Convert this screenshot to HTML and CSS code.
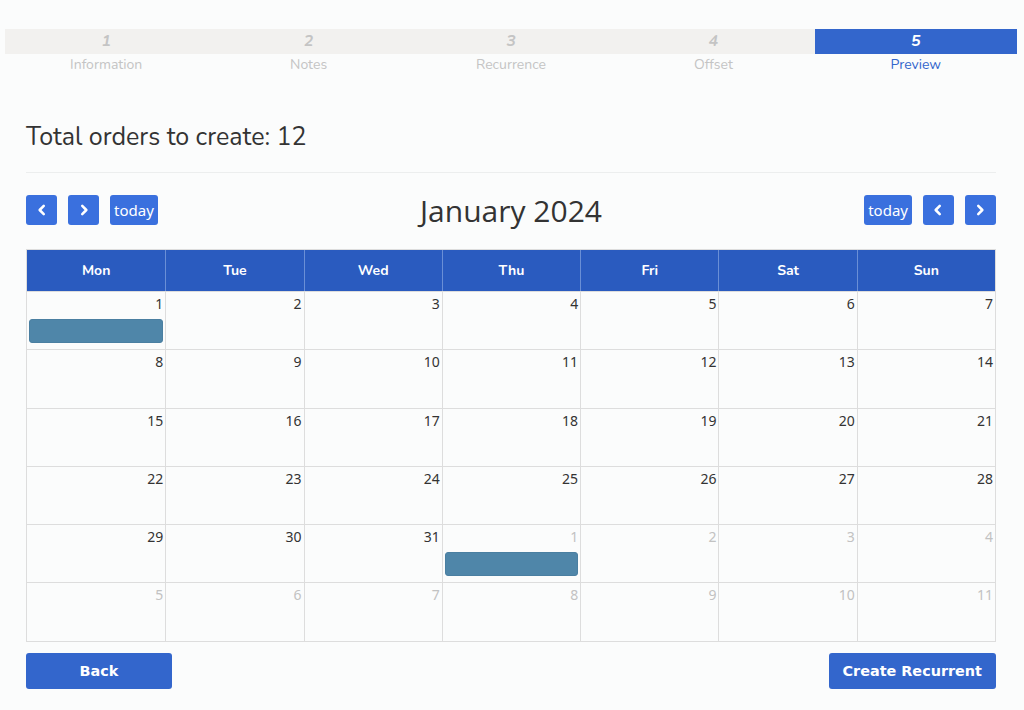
FILE: index.html
```html
<!DOCTYPE html>
<html lang="en">
<head>
    <meta charset="UTF-8">
    <title>Recurrent Order - Preview</title>
    <link rel="stylesheet" href="styles.css">
</head>
<body>

<div class="wizard">
    <div class="steps">
        <div class="step"><div class="step-num">1</div><div class="step-label">Information</div></div>
        <div class="step"><div class="step-num">2</div><div class="step-label">Notes</div></div>
        <div class="step"><div class="step-num">3</div><div class="step-label">Recurrence</div></div>
        <div class="step"><div class="step-num">4</div><div class="step-label">Offset</div></div>
        <div class="step active"><div class="step-num">5</div><div class="step-label">Preview</div></div>
    </div>

    <div class="content">
        <h2 class="total">Total orders to create: 12</h2>
        <div class="divider"></div>

        <div class="toolbar">
            <div class="tb-group">
                <button class="tb-btn icon">
                    <svg width="14" height="14" viewBox="0 0 12 12"><path d="M7.5 2.5 4 6l3.5 3.5" fill="none" stroke="#fff" stroke-width="2.2" stroke-linecap="round" stroke-linejoin="round"/></svg>
                </button>
                <button class="tb-btn icon">
                    <svg width="14" height="14" viewBox="0 0 12 12"><path d="M4.5 2.5 8 6l-3.5 3.5" fill="none" stroke="#fff" stroke-width="2.2" stroke-linecap="round" stroke-linejoin="round"/></svg>
                </button>
                <button class="tb-btn">today</button>
            </div>
            <div class="cal-title">January 2024</div>
            <div class="tb-group right">
                <button class="tb-btn">today</button>
                <button class="tb-btn icon">
                    <svg width="14" height="14" viewBox="0 0 12 12"><path d="M7.5 2.5 4 6l3.5 3.5" fill="none" stroke="#fff" stroke-width="2.2" stroke-linecap="round" stroke-linejoin="round"/></svg>
                </button>
                <button class="tb-btn icon">
                    <svg width="14" height="14" viewBox="0 0 12 12"><path d="M4.5 2.5 8 6l-3.5 3.5" fill="none" stroke="#fff" stroke-width="2.2" stroke-linecap="round" stroke-linejoin="round"/></svg>
                </button>
            </div>
        </div>

        <div class="calendar">
            <div class="cal-head">
                <div>Mon</div><div>Tue</div><div>Wed</div><div>Thu</div><div>Fri</div><div>Sat</div><div>Sun</div>
            </div>
            <div class="cal-body" id="calBody"></div>
        </div>

        <div class="actions">
            <button class="btn">Back</button>
            <button class="btn">Create Recurrent</button>
        </div>
    </div>
</div>

<script>
    const body = document.getElementById('calBody');
    const events = [0, 31];
    for (let i = 0; i < 42; i++) {
        const day = i < 31 ? i + 1 : i - 30;
        const cell = document.createElement('div');
        cell.className = 'day' + (i >= 31 ? ' other' : '');
        cell.innerHTML = '<div class="day-num">' + day + '</div>';
        if (events.includes(i)) {
            cell.innerHTML += '<div class="event"></div>';
        }
        body.appendChild(cell);
    }
</script>

</body>
</html>
```

FILE: styles.css
```css
body {
    margin: 0;
    background-color: #fbfcfc;
    font-family: "Nunito", "Noto Sans", sans-serif;
    color: #333;
}

.wizard {
    padding: 29px 7px 0 5px;
}

.steps {
    display: grid;
    grid-template-columns: repeat(5, 1fr);
}

.step {
    text-align: center;
}

.step-num {
    height: 25px;
    line-height: 25px;
    background-color: #f2f1ef;
    color: #c4c4c4;
    font-style: italic;
    font-weight: bold;
    font-size: 16px;
}

.step-label {
    color: #c4c4c4;
    font-size: 14px;
    line-height: 21px;
}

.step.active .step-num {
    background-color: #3366cc;
    color: #fff;
}

.step.active .step-label {
    color: #3366cc;
}

.content {
    padding: 0 21px 0 21px;
}

.total {
    margin: 46px 0 0;
    font-size: 25px;
    font-weight: normal;
    color: #333;
    line-height: 32px;
}

.divider {
    border-top: 1px solid #eceeee;
    margin-top: 19px;
}

.toolbar {
    display: flex;
    align-items: center;
    justify-content: space-between;
    margin-top: 21px;
    height: 32px;
}

.tb-group {
    display: flex;
    gap: 11px;
    width: 200px;
}

.tb-group.right {
    justify-content: flex-end;
}

.tb-btn {
    height: 30px;
    padding: 0 4px;
    border: none;
    border-radius: 3px;
    background-color: #3a70de;
    color: #fff;
    font-family: "Noto Sans", sans-serif;
    font-size: 15px;
    display: flex;
    align-items: center;
    justify-content: center;
}

.tb-btn.icon {
    width: 31px;
}

.cal-title {
    font-family: "Open Sans", "Noto Sans", sans-serif;
    font-size: 30px;
    color: #333;
}

.calendar {
    margin-top: 23px;
    border: 1px solid #dddddd;
}

.cal-head {
    display: grid;
    grid-template-columns: repeat(7, 1fr);
    background-color: #2a5bbf;
}

.cal-head div {
    height: 41px;
    line-height: 41px;
    text-align: center;
    color: #fff;
    font-weight: bold;
    font-size: 14px;
    border-left: 1px solid #6a8fd6;
}

.cal-head div:first-child {
    border-left: none;
}

.cal-body {
    display: grid;
    grid-template-columns: repeat(7, 1fr);
    grid-auto-rows: 58.3px;
}

.day {
    border-left: 1px solid #dddddd;
    border-top: 1px solid #dddddd;
    padding: 2px 2px 0 2px;
    box-sizing: border-box;
}

.day:nth-child(7n+1) {
    border-left: none;
}

.day-num {
    text-align: right;
    font-family: "Noto Sans", sans-serif;
    font-size: 14px;
    line-height: 19px;
    color: #333;
}

.day.other .day-num {
    color: #c2c2c2;
}

.event {
    margin-top: 6px;
    height: 24px;
    border-radius: 3px;
    background-color: #4f86a9;
    border: 1px solid #4a7fa1;
    box-sizing: border-box;
}

.actions {
    display: flex;
    justify-content: space-between;
    margin-top: 11px;
}

.btn {
    height: 36px;
    min-width: 146px;
    padding: 0 14px;
    border: none;
    border-radius: 3px;
    background-color: #3366cc;
    color: #fff;
    font-family: "DejaVu Sans", sans-serif;
    font-weight: bold;
    font-size: 14.4px;
}
```
